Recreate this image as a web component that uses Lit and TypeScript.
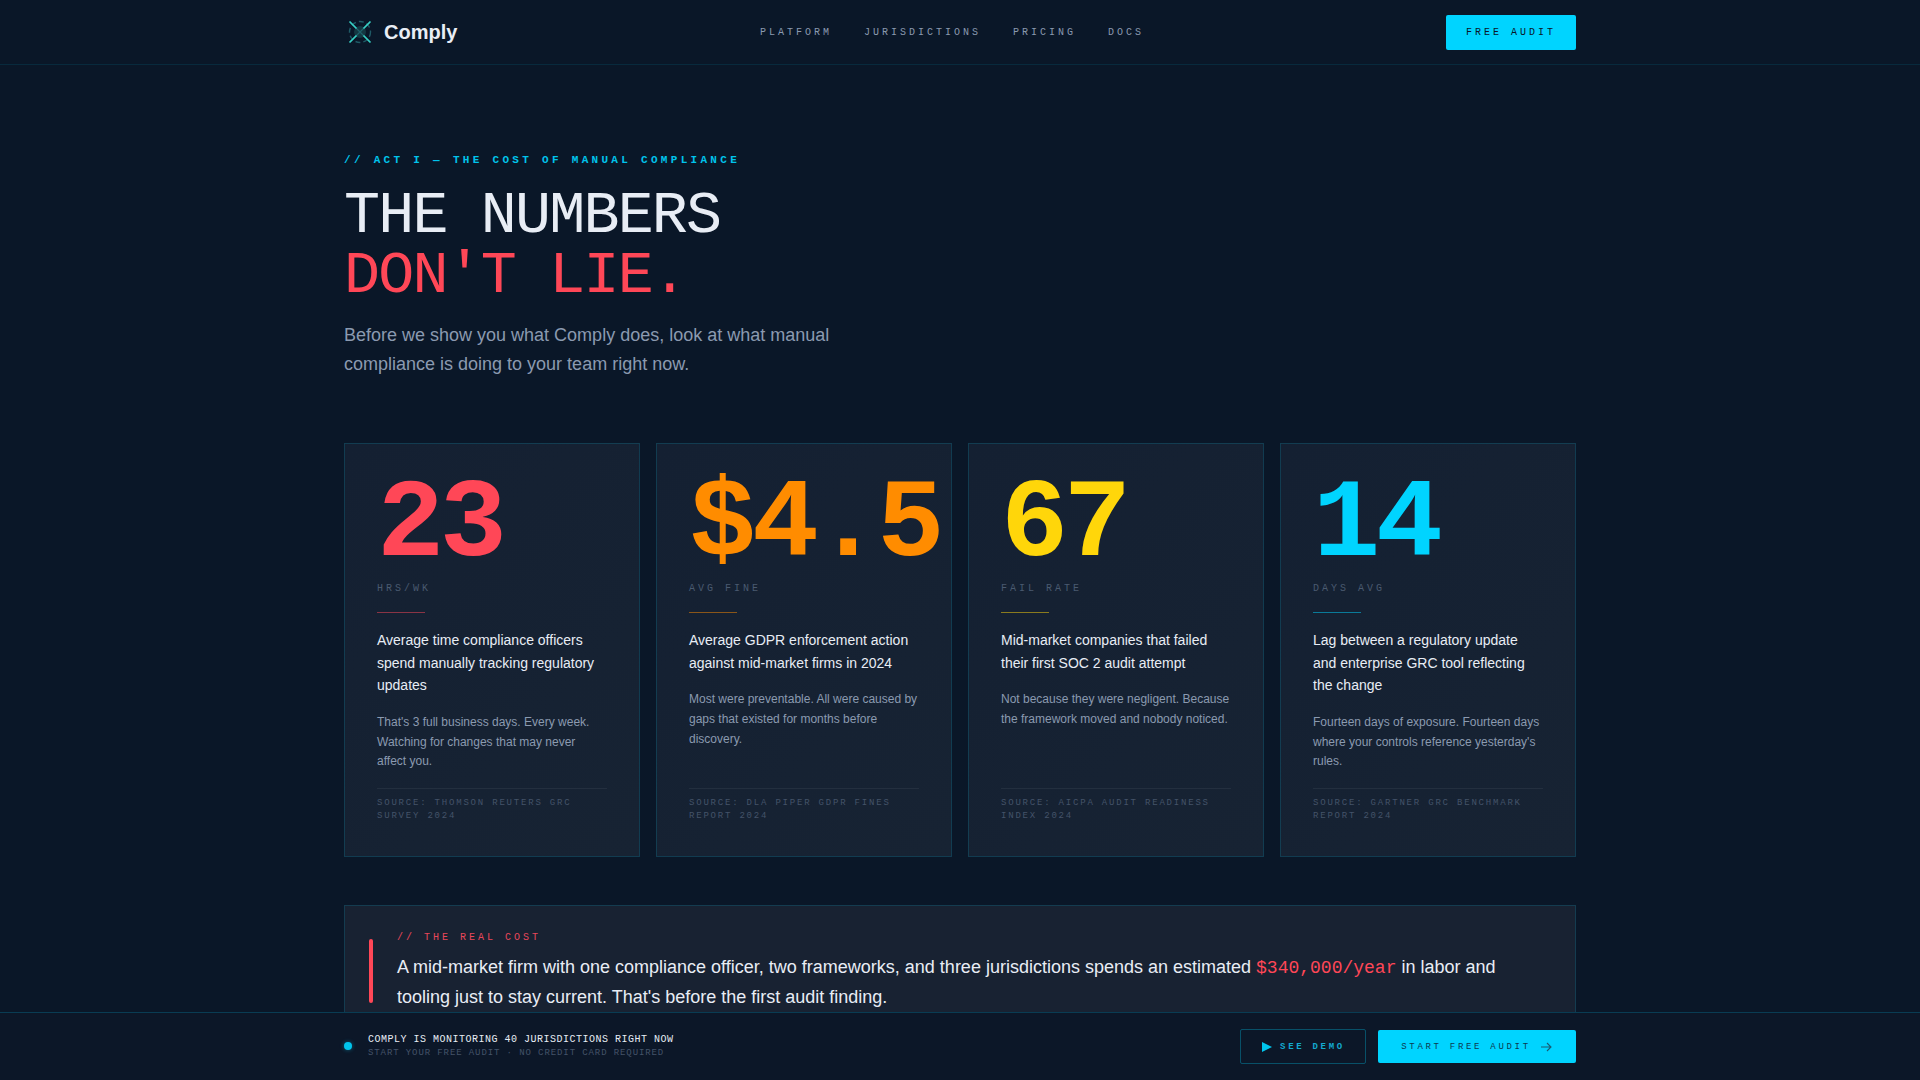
import { LitElement, html, css, svg } from "lit";
import { customElement } from "lit/decorators.js";

const cards = [
  { n: "23", c: "#ff4757", l: "HRS/WK", t: "Average time compliance officers spend manually tracking regulatory updates", d: "That's 3 full business days. Every week. Watching for changes that may never affect you.", s: "SOURCE: THOMSON REUTERS GRC SURVEY 2024" },
  { n: "$4.5", c: "#ff8c00", l: "AVG FINE", t: "Average GDPR enforcement action against mid-market firms in 2024", d: "Most were preventable. All were caused by gaps that existed for months before discovery.", s: "SOURCE: DLA PIPER GDPR FINES REPORT 2024" },
  { n: "67", c: "#ffd60a", l: "FAIL RATE", t: "Mid-market companies that failed their first SOC 2 audit attempt", d: "Not because they were negligent. Because the framework moved and nobody noticed.", s: "SOURCE: AICPA AUDIT READINESS INDEX 2024" },
  { n: "14", c: "#00d4ff", l: "DAYS AVG", t: "Lag between a regulatory update and enterprise GRC tool reflecting the change", d: "Fourteen days of exposure. Fourteen days where your controls reference yesterday's rules.", s: "SOURCE: GARTNER GRC BENCHMARK REPORT 2024" },
];

@customElement("app-root")
export class AppRoot extends LitElement {
  static styles = css`
    :host { display: block; height: 100vh; overflow: hidden; position: relative; background: #0a1728; color: #e8edf5; font-family: "Liberation Sans", Arial, sans-serif; }
    * { box-sizing: border-box; }
    nav { height: 65px; border-bottom: 1px solid rgba(0,212,255,0.1); }
    .wrap { width: 1232px; margin: 0 auto; }
    .navin { height: 64px; display: flex; align-items: center; justify-content: space-between; position: relative; }
    .logo { display: flex; align-items: center; gap: 10px; font-size: 20px; font-weight: 700; color: #e8edf5; }
    .logo svg { display: block; margin-left: 2px; }
    .links { display: flex; gap: 32px; font: 10px "Liberation Mono", monospace; letter-spacing: 3px; color: #8b9ab0; position: absolute; left: 416px; }
    .cta { background: #00d4ff; color: #0a1628; border-radius: 2px; height: 35px; width: 130px; display: flex; align-items: center; justify-content: center; font: 10px "Liberation Mono", monospace; letter-spacing: 3px; }
    main { padding-top: 88px; }
    .eyebrow { font: 700 11px/14px "Liberation Mono", monospace; letter-spacing: 3.3px; color: #00c4ec; }
    h1 { margin: 19px 0 0; font: 400 60px/60px "Liberation Mono", monospace; color: #e8edf5; letter-spacing: -1.8px; }
    h1 span { display: block; color: #ff4757; }
    .lead { margin: 15px 0 0; font-size: 18px; line-height: 29px; color: #8b9ab0; width: 520px; }
    .grid { margin-top: 64px; display: grid; grid-template-columns: repeat(4, minmax(0, 1fr)); gap: 16px; }
    .card { height: 414px; padding: 32px 32px 33px; background: linear-gradient(135deg, #142032, #172333); border: 1px solid rgba(0,212,255,0.15); display: flex; flex-direction: column; }
    .num { font: 700 112px/99px "Liberation Mono", monospace; letter-spacing: -4.48px; white-space: nowrap; }
    .lab { margin-top: 7px; font: 10px/14px "Liberation Mono", monospace; letter-spacing: 3px; color: #4a5a70; }
    .rule { width: 48px; height: 1px; margin-top: 16px; opacity: .5; }
    .t { margin: 16px 0 0; font-size: 14px; line-height: 22.6px; color: #e8edf5; }
    .d { margin: 16px 0 0; font-size: 12px; line-height: 19.8px; color: #8b9ab0; }
    .s { margin-top: auto; border-top: 1px solid rgba(255,255,255,.06); padding-top: 8px; font: 9px/13px "Liberation Mono", monospace; letter-spacing: 1.8px; color: #445369; }
    .cost { margin-top: 48px; height: 200px; background: #182232; border: 1px solid rgba(0,212,255,0.15); padding: 25px 24px 24px 52px; position: relative; }
    .bar { position: absolute; left: 24px; top: 33px; width: 4px; height: 64px; background: #ff4757; border-radius: 2px; }
    .ct { font: 10px/14px "Liberation Mono", monospace; letter-spacing: 3px; color: #e8475a; }
    .cb { margin: 7px 0 0; font-size: 18px; line-height: 30px; color: #e8edf5; }
    .cb b { font: 400 18px/1 "Liberation Mono", monospace; color: #ff4757; }
    .foot { position: absolute; left: 0; right: 0; bottom: 0; height: 68px; background: #0c1728; border-top: 1px solid rgba(0,212,255,0.2); }
    .footin { height: 67px; display: flex; align-items: center; }
    .dot { width: 8px; height: 8px; border-radius: 50%; background: #00c4ec; box-shadow: 0 0 4px rgba(0,212,255,.4); margin: -2px 16px 0 0; }
    .f1 { font: 10px/13px "Liberation Mono", monospace; letter-spacing: .5px; color: #e8edf5; margin-top: -1px; }
    .f2 { font: 9px/13px "Liberation Mono", monospace; letter-spacing: .9px; color: #445369; margin-top: 1px; }
    .btns { margin-left: auto; display: flex; gap: 12px; align-items: center; }
    .ghost { width: 126px; height: 35px; border: 1px solid rgba(0,212,255,.3); border-radius: 2px; display: flex; align-items: center; justify-content: center; gap: 8px; color: #13a9cf; font: 700 9px "Liberation Mono", monospace; letter-spacing: 2.7px; padding-left: 1px; }
    .prim { width: 198px; height: 33px; background: #00d4ff; color: #0c3a50; border-radius: 2px; display: flex; align-items: center; justify-content: center; gap: 8px; font: 9px "Liberation Mono", monospace; letter-spacing: 2.7px; }
  `;

  logo() {
    return svg`<svg width="28" height="28" viewBox="0 0 28 28" fill="none">
      <circle cx="14" cy="14" r="10.5" stroke="#1f5a66" stroke-width="1.4" stroke-dasharray="5 3"/>
      <circle cx="14" cy="14" r="6" fill="#143742"/>
      <path d="M4 4 L24 24 M24 4 L4 24" stroke="#1e5f69" stroke-width="1.2"/>
      <path d="M3.5 3.5 L10.5 10.5 M24.5 3.5 L17.5 10.5 M3.5 24.5 L10.5 17.5 M24.5 24.5 L17.5 17.5" stroke="#37d0c4" stroke-width="1.6"/>
    </svg>`;
  }

  render() {
    return html`
      <nav><div class="wrap navin">
        <div class="logo">${this.logo()}<span>Comply</span></div>
        <div class="links"><span>PLATFORM</span><span>JURISDICTIONS</span><span>PRICING</span><span>DOCS</span></div>
        <div class="cta">FREE AUDIT</div>
      </div></nav>
      <main class="wrap">
        <div class="eyebrow">// ACT I — THE COST OF MANUAL COMPLIANCE</div>
        <h1>THE NUMBERS<span>DON'T LIE.</span></h1>
        <p class="lead">Before we show you what Comply does, look at what manual compliance is doing to your team right now.</p>
        <div class="grid">
          ${cards.map(c => html`<div class="card">
            <div class="num" style="color:${c.c}">${c.n}</div>
            <div class="lab">${c.l}</div>
            <div class="rule" style="background:${c.c}"></div>
            <p class="t">${c.t}</p>
            <p class="d">${c.d}</p>
            <div class="s">${c.s}</div>
          </div>`)}
        </div>
        <div class="cost">
          <div class="bar"></div>
          <div class="ct">// THE REAL COST</div>
          <p class="cb">A mid-market firm with one compliance officer, two frameworks, and three jurisdictions spends an estimated <b>$340,000/year</b> in labor and tooling just to stay current. That's before the first audit finding.</p>
        </div>
      </main>
      <div class="foot"><div class="wrap footin">
        <div class="dot"></div>
        <div><div class="f1">COMPLY IS MONITORING 40 JURISDICTIONS RIGHT NOW</div><div class="f2">START YOUR FREE AUDIT · NO CREDIT CARD REQUIRED</div></div>
        <div class="btns">
          <div class="ghost"><svg width="10" height="10" viewBox="0 0 10 10"><path d="M0 0 L10 5 L0 10 Z" fill="#00c4ec"/></svg>SEE DEMO</div>
          <div class="prim">START FREE AUDIT<svg width="14" height="14" viewBox="0 0 14 14" fill="none" stroke="#1a5a72" stroke-width="1.1"><path d="M2 7 H12 M8 3 L12 7 L8 11"/></svg></div>
        </div>
      </div></div>
    `;
  }
}
